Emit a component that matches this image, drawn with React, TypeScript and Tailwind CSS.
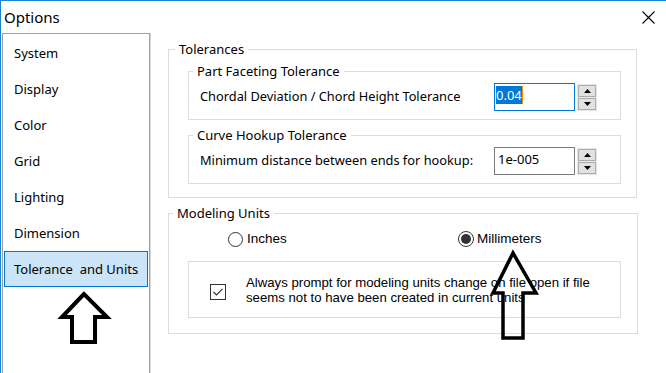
import React from 'react';

const navItems = ['System', 'Display', 'Color', 'Grid', 'Lighting', 'Dimension', 'Tolerance  and Units'];

function Spinner() {
  return (
    <div className="flex flex-col w-[20px] h-[27px] bg-[#e6e6e6] p-[1px] gap-[1px]">
      <div className="flex-1 flex items-center justify-center bg-[#e1e1e1] border border-[#adadad]">
        <svg width="7" height="4" viewBox="0 0 7 4"><path d="M3.5 0 L7 4 L0 4 Z" fill="#000" /></svg>
      </div>
      <div className="flex-1 flex items-center justify-center bg-[#e1e1e1] border border-[#adadad]">
        <svg width="7" height="4" viewBox="0 0 7 4"><path d="M0 0 L7 0 L3.5 4 Z" fill="#000" /></svg>
      </div>
    </div>
  );
}

function Arrow({ points, width }: { points: string; width: number }) {
  return (
    <svg className="absolute left-[-1px] top-[-1px] pointer-events-none" width="666" height="373" viewBox="0 0 666 373">
      <polygon points={points} fill="none" stroke="#000" strokeWidth={width} strokeLinejoin="miter" />
    </svg>
  );
}

export default function App() {
  const ui = { fontFamily: '"Segoe UI", "Noto Sans", "Open Sans", sans-serif' };
  const arial = { fontFamily: '"Liberation Sans", Arial, sans-serif' };

  return (
    <div className="relative w-[666px] h-[373px] bg-white border-t border-l border-[#1883d7] overflow-hidden text-black" style={ui}>
      {/* Title bar */}
      <div className="flex items-center justify-between h-[32px] pl-[3px] pr-[11px]">
        <span className="text-[15px] leading-[20px]">Options</span>
        <svg width="13" height="13" viewBox="0 0 13 13">
          <path d="M0.5 0.5 L12.5 12.5 M12.5 0.5 L0.5 12.5" stroke="#000" strokeWidth="1.1" />
        </svg>
      </div>

      <div className="flex h-[340px]">
        {/* Sidebar */}
        <div className="ml-[1px] w-[148px] h-full border border-b-0 border-[#a0a0a0] pt-[1px] px-[1px]">
          {navItems.map((item, i) => (
            <div
              key={item}
              className={`h-[36px] flex items-center pl-[9px] pt-[2px] text-[13px] whitespace-pre border ${
                i === navItems.length - 1 ? 'bg-[#cce4f7] border-[#0078d7]' : 'border-transparent'
              }`}
            >
              {item}
            </div>
          ))}
        </div>
        <div className="w-[1px] h-full bg-[#d9d9d9]" />

        {/* Right panel */}
        <div className="flex-1 pl-[17px] pt-[7px] text-[13px]">
          <fieldset className="w-[469px] border border-[#dcdcdc]">
            <legend className="ml-[6px] px-[4px] leading-[18px]">Tolerances</legend>
            <div className="pl-[19px] pr-[15px] pt-[4px] pb-[13px]">
              <fieldset className="border border-[#dcdcdc]">
                <legend className="ml-[4px] px-[4px] leading-[18px]">Part Faceting Tolerance</legend>
                <div className="flex items-center pl-[11px] pr-[23px] pt-[3px] pb-[8px]">
                  <span className="flex-1 text-[12.8px]">Chordal Deviation / Chord Height Tolerance</span>
                  <div className="w-[81px] h-[28px] border border-[#0078d7] pl-[1px] pt-[2px]">
                    <span className="bg-[#0078d7] text-white leading-[18px] border-r border-[#ff8c00]">0.04</span>
                  </div>
                  <div className="ml-[2px]"><Spinner /></div>
                </div>
              </fieldset>

              <fieldset className="mt-[6px] border border-[#dcdcdc]">
                <legend className="ml-[4px] px-[4px] leading-[18px]">Curve Hookup Tolerance</legend>
                <div className="flex items-center pl-[11px] pr-[23px] pt-[3px] pb-[8px]">
                  <span className="flex-1 text-[12.8px]">Minimum distance between ends for hookup:</span>
                  <div className="w-[81px] h-[28px] border border-[#7a7a7a] pl-[3px] pt-[2px] leading-[18px]">1e-005</div>
                  <div className="ml-[2px]"><Spinner /></div>
                </div>
              </fieldset>
            </div>
          </fieldset>

          <fieldset className="mt-[6px] w-[470px] border border-[#dcdcdc]">
            <legend className="ml-[4px] px-[4px] leading-[18px]">Modeling Units</legend>
            <div className="pt-[7px] pb-[15px]">
              <div className="flex items-center h-[20px]" style={arial}>
                <div className="flex items-center ml-[59px] w-[230px]">
                  <span className="w-[15px] h-[15px] rounded-full border border-[#333]" />
                  <span className="ml-[4px] text-[13.5px]">Inches</span>
                </div>
                <div className="flex items-center">
                  <span className="w-[16px] h-[16px] rounded-full border border-[#333] flex items-center justify-center">
                    <span className="w-[10px] h-[10px] rounded-full bg-[#333]" />
                  </span>
                  <span className="ml-[3px] text-[13.5px]">Millimeters</span>
                </div>
              </div>

              <div className="mt-[12px] ml-[19px] w-[433px] h-[57px] border border-[#dcdcdc] flex items-center pl-[21px]">
                <span className="w-[16px] h-[16px] mt-[4px] border border-[#333] flex items-center justify-center">
                  <svg width="10" height="8" viewBox="0 0 10 8">
                    <path d="M0.5 4 L3.5 7 L9.5 0.8" fill="none" stroke="#333" strokeWidth="1.1" />
                  </svg>
                </span>
                <div className="ml-[20px] text-[13.2px] leading-[15px]" style={arial}>
                  Always prompt for modeling units change on file open if file
                  <br />
                  seems not to have been created in current units
                </div>
              </div>
            </div>
          </fieldset>
        </div>
      </div>

      {/* Annotation arrows */}
      <Arrow width={4} points="84,294 62,317 72,317 72,342 95,342 95,317 107,317" />
      <Arrow width={3.5} points="513,253 493,293 503,293 503,338 523,338 523,293 536,293" />
    </div>
  );
}
